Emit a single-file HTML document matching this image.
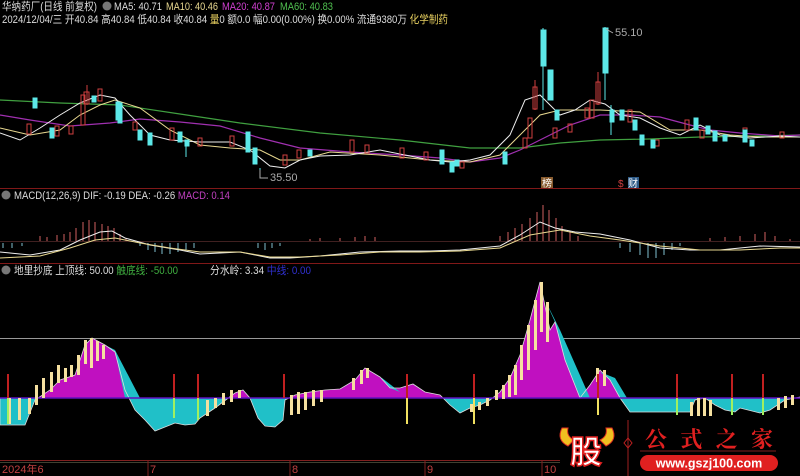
<!DOCTYPE html>
<html><head><meta charset="utf-8"><style>
body{margin:0;background:#000;width:800px;height:476px;overflow:hidden}
svg{display:block;font-family:"Liberation Sans","Noto Sans CJK SC",sans-serif;font-size:11px}
</style></head><body>
<svg width="800" height="476" viewBox="0 0 800 476" xmlns="http://www.w3.org/2000/svg">
<rect width="800" height="476" fill="#000"/>
<!-- header -->
<circle cx="107" cy="6" r="4.5" fill="#777"/>
<text x="2" y="10" fill="#ddd" textLength="95" lengthAdjust="spacingAndGlyphs">华纳药厂(日线 前复权)</text>
<text x="114" y="10" fill="#ddd" textLength="48" lengthAdjust="spacingAndGlyphs">MA5: 40.71</text>
<text x="166" y="10" fill="#e8d890" textLength="52" lengthAdjust="spacingAndGlyphs">MA10: 40.46</text>
<text x="222" y="10" fill="#d040d0" textLength="53" lengthAdjust="spacingAndGlyphs">MA20: 40.87</text>
<text x="280" y="10" fill="#50c050" textLength="53" lengthAdjust="spacingAndGlyphs">MA60: 40.83</text>
<text x="2" y="23" fill="#ddd" textLength="446" lengthAdjust="spacingAndGlyphs">2024/12/04/三 开40.84 高40.84 低40.84 收40.84 <tspan fill="#e8d060">量</tspan>0 额0.0 幅0.00(0.00%) 换0.00% 流通9380万 <tspan fill="#e8d060">化学制药</tspan></text>

<!-- MAs -->
<polyline fill="none" stroke="#40a040" stroke-width="1.2" points="0,100 60,103 120,105 180,114 240,123 320,133 400,140 470,148 520,148 560,143 600,140 650,139 700,137 760,136 800,135"/>
<polyline fill="none" stroke="#a030b0" stroke-width="1.2" points="0,115 30,120 70,126 110,123 140,119 180,122 220,126 260,138 300,148 350,152 400,155 440,158 470,162 500,158 520,150 540,140 570,125 600,115 630,115 660,117 690,125 710,130 740,133 780,136 800,135"/>
<polyline fill="none" stroke="#e8d890" stroke-width="1" points="0,128 30,135 60,130 80,115 100,105 115,100 140,108 170,130 200,145 230,148 260,150 280,160 300,160 330,152 380,155 430,160 470,162 500,155 520,135 540,115 560,110 600,110 640,112 670,130 700,130 730,135 760,137 800,137"/>
<polyline fill="none" stroke="#eee" stroke-width="1" points="0,133 20,140 40,128 60,115 80,103 100,95 115,98 130,115 150,135 170,140 200,142 230,142 250,150 270,166 285,168 300,160 320,156 350,155 380,150 410,156 430,160 450,162 470,160 490,155 510,135 525,100 540,95 550,105 560,115 575,110 590,100 605,104 620,115 640,118 660,128 680,135 700,125 720,135 750,138 780,136 800,137"/>

<g stroke="#d04040" fill="none" stroke-width="1">
<line x1="87" y1="85" x2="87" y2="105"/><rect x="84" y="92" width="5" height="12"/>
<rect x="81" y="95" width="4" height="30"/><rect x="98" y="89" width="4" height="12"/>
<rect x="69" y="126" width="4" height="8"/><rect x="27" y="124" width="4" height="10"/>
<rect x="55" y="126" width="4" height="10"/><rect x="133" y="122" width="4" height="8"/>
<rect x="170" y="128" width="4" height="12"/><rect x="198" y="138" width="4" height="8"/>
<rect x="230" y="136" width="4" height="10"/><rect x="283" y="155" width="4" height="10"/>
<rect x="297" y="150" width="4" height="8"/><rect x="350" y="140" width="4" height="12"/>
<rect x="365" y="145" width="4" height="8"/><rect x="400" y="148" width="4" height="10"/>
<line x1="535" y1="80" x2="535" y2="110"/><rect x="533" y="87" width="4" height="22"/>
<rect x="528" y="118" width="4" height="20"/><rect x="523" y="138" width="4" height="10"/>
<line x1="598" y1="72" x2="598" y2="105"/><rect x="596" y="82" width="4" height="22"/>
<rect x="590" y="100" width="4" height="18"/><rect x="585" y="108" width="4" height="10"/>
<rect x="628" y="110" width="4" height="12"/><rect x="685" y="120" width="4" height="10"/>
<rect x="700" y="130" width="4" height="8"/><rect x="743" y="128" width="4" height="8"/>
<rect x="780" y="132" width="4" height="6"/><rect x="568" y="124" width="4" height="8"/>
<rect x="553" y="128" width="4" height="10"/><rect x="655" y="140" width="4" height="6"/>
<rect x="460" y="162" width="4" height="6"/><rect x="424" y="152" width="4" height="8"/>
</g>
<g fill="#5ce8e8" stroke="#5ce8e8">
<line x1="543" y1="28" x2="543" y2="110"/><rect x="541" y="30" width="5" height="36"/>
<rect x="548" y="70" width="5" height="30"/><rect x="555" y="110" width="4" height="10"/>
<line x1="605" y1="27" x2="605" y2="100"/><rect x="603" y="28" width="5" height="45"/>
<rect x="610" y="110" width="4" height="12"/><line x1="611" y1="105" x2="611" y2="135"/>
<rect x="118" y="103" width="4" height="20"/><rect x="33" y="98" width="4" height="10"/>
<rect x="50" y="128" width="4" height="10"/><rect x="92" y="96" width="4" height="6"/>
<rect x="116" y="102" width="4" height="18"/><rect x="138" y="130" width="4" height="10"/>
<rect x="148" y="133" width="4" height="12"/><rect x="178" y="132" width="4" height="10"/>
<rect x="185" y="140" width="4" height="6"/><line x1="186" y1="140" x2="186" y2="157"/>
<rect x="246" y="132" width="4" height="20"/><rect x="253" y="148" width="4" height="16"/>
<line x1="260" y1="168" x2="260" y2="178"/><rect x="308" y="150" width="4" height="6"/>
<rect x="440" y="150" width="4" height="14"/><rect x="450" y="162" width="4" height="10"/>
<rect x="620" y="110" width="4" height="10"/><rect x="633" y="120" width="4" height="10"/>
<rect x="640" y="135" width="4" height="10"/><rect x="651" y="140" width="4" height="8"/>
<rect x="694" y="118" width="4" height="12"/><rect x="706" y="126" width="4" height="8"/>
<rect x="713" y="131" width="4" height="10"/><rect x="723" y="135" width="4" height="6"/>
<rect x="743" y="130" width="4" height="12"/><rect x="750" y="140" width="4" height="6"/>
<rect x="503" y="152" width="4" height="12"/><rect x="455" y="160" width="4" height="6"/>
</g>
<polyline fill="none" stroke="#aaa" points="260,170 260,178 268,178"/>
<text x="270" y="181" fill="#aaa">35.50</text>
<polyline fill="none" stroke="#aaa" points="606,29 613,33"/>
<text x="615" y="36" fill="#aaa">55.10</text>
<rect x="541" y="177" width="12" height="11" fill="#c08040" opacity="0.7"/><text x="542" y="187" fill="#fff" font-size="10">榜</text>
<text x="618" y="187" fill="#d04040" font-size="10">$</text>
<rect x="628" y="177" width="11" height="11" fill="#4080c0" opacity="0.7"/><text x="628" y="187" fill="#fff" font-size="10">财</text>

<line x1="0" y1="188.5" x2="800" y2="188.5" stroke="#801818"/>
<circle cx="6" cy="195" r="4.5" fill="#777"/>
<text x="14" y="199" fill="#ddd" textLength="216" lengthAdjust="spacingAndGlyphs">MACD(12,26,9)  DIF: -0.19  DEA: -0.26  <tspan fill="#c040c0">MACD: 0.14</tspan></text>
<line x1="0" y1="241.5" x2="800" y2="241.5" stroke="#402020"/>
<g stroke="#d06060" stroke-width="1">
<line x1="40" y1="241" x2="40" y2="236"/><line x1="47" y1="241" x2="47" y2="237"/><line x1="57" y1="241" x2="57" y2="235"/><line x1="64" y1="241" x2="64" y2="234"/><line x1="70" y1="241" x2="70" y2="232"/><line x1="76" y1="241" x2="76" y2="228"/><line x1="83" y1="241" x2="83" y2="222"/><line x1="89" y1="241" x2="89" y2="220"/><line x1="95" y1="241" x2="95" y2="222"/><line x1="102" y1="241" x2="102" y2="224"/><line x1="108" y1="241" x2="108" y2="226"/><line x1="114" y1="241" x2="114" y2="228"/><line x1="120" y1="241" x2="120" y2="234"/><line x1="126" y1="241" x2="126" y2="238"/>
<line x1="310" y1="241" x2="310" y2="239"/><line x1="320" y1="241" x2="320" y2="238"/><line x1="340" y1="241" x2="340" y2="238"/><line x1="355" y1="241" x2="355" y2="237"/><line x1="365" y1="241" x2="365" y2="236"/><line x1="375" y1="241" x2="375" y2="237"/>
<line x1="500" y1="241" x2="500" y2="236"/><line x1="508" y1="241" x2="508" y2="232"/><line x1="515" y1="241" x2="515" y2="228"/><line x1="522" y1="241" x2="522" y2="224"/><line x1="530" y1="241" x2="530" y2="218"/><line x1="537" y1="241" x2="537" y2="212"/><line x1="543" y1="241" x2="543" y2="205"/><line x1="549" y1="241" x2="549" y2="210"/><line x1="556" y1="241" x2="556" y2="218"/><line x1="562" y1="241" x2="562" y2="226"/><line x1="570" y1="241" x2="570" y2="232"/><line x1="578" y1="241" x2="578" y2="236"/>
<line x1="710" y1="241" x2="710" y2="238"/><line x1="725" y1="241" x2="725" y2="237"/><line x1="740" y1="241" x2="740" y2="236"/><line x1="755" y1="241" x2="755" y2="234"/><line x1="765" y1="241" x2="765" y2="232"/><line x1="775" y1="241" x2="775" y2="236"/><line x1="790" y1="241" x2="790" y2="239"/>
</g>
<g stroke="#80c0d0" stroke-width="1">
<line x1="3" y1="243" x2="3" y2="248"/><line x1="12" y1="243" x2="12" y2="248"/><line x1="22" y1="243" x2="22" y2="246"/>
<line x1="140" y1="243" x2="140" y2="246"/><line x1="148" y1="243" x2="148" y2="250"/><line x1="155" y1="243" x2="155" y2="252"/><line x1="162" y1="243" x2="162" y2="254"/><line x1="170" y1="243" x2="170" y2="254"/><line x1="178" y1="243" x2="178" y2="252"/><line x1="186" y1="243" x2="186" y2="250"/><line x1="194" y1="243" x2="194" y2="248"/>
<line x1="258" y1="243" x2="258" y2="248"/><line x1="265" y1="243" x2="265" y2="250"/><line x1="272" y1="243" x2="272" y2="248"/><line x1="280" y1="243" x2="280" y2="246"/>
<line x1="620" y1="243" x2="620" y2="248"/><line x1="630" y1="243" x2="630" y2="252"/><line x1="640" y1="243" x2="640" y2="255"/><line x1="648" y1="243" x2="648" y2="258"/><line x1="656" y1="243" x2="656" y2="258"/><line x1="664" y1="243" x2="664" y2="255"/><line x1="672" y1="243" x2="672" y2="250"/><line x1="680" y1="243" x2="680" y2="246"/>
</g>
<polyline fill="none" stroke="#eee" points="0,252 30,255 60,250 80,240 100,232 112,231 125,238 150,245 180,250 200,254 240,252 270,258 290,258 320,256 360,252 400,251 430,251 460,250 500,246 520,235 540,222 555,228 575,232 600,234 630,240 660,248 690,250 720,250 760,246 800,247"/>
<polyline fill="none" stroke="#e8d890" points="0,258 40,256 70,248 95,240 115,238 140,243 170,248 200,252 240,252 270,257 300,257 340,255 380,252 420,252 460,251 500,248 530,235 560,230 590,236 620,240 660,246 700,250 740,250 780,248 800,248"/>

<line x1="0" y1="263.5" x2="800" y2="263.5" stroke="#801818"/>
<circle cx="6" cy="270" r="4.5" fill="#777"/>
<text x="14" y="274" fill="#ddd" textLength="164" lengthAdjust="spacingAndGlyphs">地里抄底  上顶线: 50.00  <tspan fill="#40b040">触底线: -50.00</tspan></text>
<text x="210" y="274" fill="#ddd" textLength="101" lengthAdjust="spacingAndGlyphs">分水岭: 3.34  <tspan fill="#3030d0">中线: 0.00</tspan></text>
<line x1="0" y1="338.5" x2="800" y2="338.5" stroke="#999"/>
<defs>
<clipPath id="up"><rect x="0" y="0" width="800" height="398"/></clipPath>
<clipPath id="dn"><rect x="0" y="398" width="800" height="80"/></clipPath>
<polygon id="ap" points="0,398 0,425 25,425 35,400 50,390 60,380 75,375 85,345 92,338 105,345 115,352 125,390 135,410 145,420 155,431 165,427 175,423 185,425 195,424 200,418 215,408 235,393 243,390 250,398 258,418 265,426 275,427 283,420 285,400 295,395 310,392 325,390 340,389 355,380 365,368 380,377 390,388 400,388 413,384 425,392 440,395 450,405 460,413 470,408 480,405 490,400 500,392 510,378 520,355 530,320 540,282 550,330 555,322 565,360 580,398 590,385 600,370 610,380 620,398 625,405 630,412 690,412 695,400 705,398 715,405 725,410 735,412 740,408 760,413 770,410 785,400 800,397 800,398"/>
</defs>
<use href="#ap" fill="#c010c0" clip-path="url(#up)"/>
<use href="#ap" fill="#20c0c8" clip-path="url(#dn)"/>
<polygon fill="#20c0c8" points="105,345 115,350 140,398 125,398 115,352"/>
<polygon fill="#20c0c8" points="545,300 560,330 590,398 580,398 565,360 555,322"/>
<polygon fill="#20c0c8" points="600,372 615,378 627,398 620,398 610,380"/>
<polygon fill="#20c0c8" points="365,370 382,378 400,392 390,388 380,377"/>
<use href="#ap" fill="none" stroke="#ddd" stroke-width="0.8"/>
<line x1="0" y1="398" x2="800" y2="398" stroke="#6010c0" stroke-width="1.5"/>
<g fill="#f5e0a0">
<rect x="8" y="398" width="3" height="26"/><rect x="18" y="398" width="3" height="22"/><rect x="28" y="398" width="3" height="16"/>
<rect x="35" y="385" width="3" height="20"/><rect x="42" y="378" width="3" height="20"/><rect x="50" y="372" width="3" height="20"/>
<rect x="57" y="365" width="3" height="18"/><rect x="64" y="368" width="3" height="14"/><rect x="70" y="365" width="3" height="12"/>
<rect x="77" y="355" width="3" height="20"/><rect x="84" y="340" width="3" height="24"/><rect x="90" y="338" width="3" height="30"/><rect x="96" y="341" width="3" height="20"/><rect x="102" y="345" width="3" height="14"/>
<rect x="206" y="400" width="3" height="16"/><rect x="214" y="398" width="3" height="10"/><rect x="222" y="393" width="3" height="12"/><rect x="230" y="390" width="3" height="12"/><rect x="238" y="390" width="3" height="8"/>
<rect x="290" y="395" width="3" height="20"/><rect x="297" y="392" width="3" height="22"/><rect x="304" y="392" width="3" height="18"/><rect x="312" y="390" width="3" height="16"/><rect x="320" y="390" width="3" height="12"/>
<rect x="352" y="378" width="3" height="12"/><rect x="360" y="370" width="3" height="14"/><rect x="366" y="368" width="3" height="10"/>
<rect x="470" y="404" width="3" height="8"/><rect x="478" y="402" width="3" height="8"/><rect x="486" y="398" width="3" height="8"/>
<rect x="495" y="390" width="3" height="10"/><rect x="502" y="385" width="3" height="14"/><rect x="508" y="375" width="3" height="22"/><rect x="514" y="365" width="3" height="30"/>
<rect x="520" y="345" width="3" height="35"/><rect x="527" y="325" width="3" height="45"/><rect x="534" y="300" width="3" height="50"/><rect x="540" y="282" width="3" height="50"/><rect x="546" y="302" width="3" height="40"/>
<rect x="596" y="368" width="3" height="14"/><rect x="603" y="370" width="3" height="16"/>
<rect x="690" y="402" width="3" height="14"/><rect x="697" y="398" width="3" height="18"/><rect x="703" y="398" width="3" height="18"/><rect x="709" y="400" width="3" height="16"/>
<rect x="777" y="398" width="3" height="12"/><rect x="784" y="396" width="3" height="12"/><rect x="791" y="395" width="3" height="10"/>
</g>
<g stroke="#c02020" stroke-width="2">
<line x1="8" y1="374" x2="8" y2="398"/><line x1="174" y1="374" x2="174" y2="398"/><line x1="198" y1="374" x2="198" y2="398"/><line x1="284" y1="374" x2="284" y2="398"/>
<line x1="407" y1="374" x2="407" y2="398"/><line x1="474" y1="374" x2="474" y2="398"/><line x1="598" y1="374" x2="598" y2="398"/><line x1="677" y1="374" x2="677" y2="398"/><line x1="732" y1="374" x2="732" y2="398"/><line x1="763" y1="374" x2="763" y2="398"/>
</g>
<g stroke="#a0f060" stroke-width="2">
<line x1="8" y1="398" x2="8" y2="424"/><line x1="174" y1="398" x2="174" y2="418"/><line x1="198" y1="398" x2="198" y2="420"/><line x1="677" y1="398" x2="677" y2="415"/><line x1="732" y1="398" x2="732" y2="415"/><line x1="763" y1="398" x2="763" y2="415"/>
</g>
<g stroke="#f0e060" stroke-width="2">
<line x1="407" y1="398" x2="407" y2="424"/><line x1="474" y1="398" x2="474" y2="424"/><line x1="598" y1="398" x2="598" y2="415"/>
</g>
<line x1="0" y1="460.5" x2="560" y2="460.5" stroke="#802020"/>
<line x1="0" y1="462.5" x2="560" y2="462.5" stroke="#404030"/>
<g stroke="#802020"><line x1="148" y1="460" x2="148" y2="476"/><line x1="290" y1="460" x2="290" y2="476"/><line x1="425" y1="460" x2="425" y2="476"/><line x1="542" y1="460" x2="542" y2="476"/></g>
<g fill="#c04040">
<text x="2" y="473">2024年6</text><text x="150" y="473">7</text><text x="292" y="473">8</text><text x="427" y="473">9</text><text x="544" y="473">10</text>
</g>
<!-- logo -->
<path d="M562,428 Q556,440 568,446 L574,440 Q566,436 568,428Z" fill="#f0c020" stroke="#e03020"/>
<path d="M612,428 Q618,440 606,446 L600,440 Q608,436 606,428Z" fill="#f0c020" stroke="#e03020"/>
<text x="570" y="463" font-size="32" font-weight="bold" fill="#fff" stroke="#e02020" stroke-width="1.5" font-family="'Noto Sans CJK SC',sans-serif">股</text>
<line x1="628" y1="420" x2="628" y2="476" stroke="#a02020"/>
<path d="M628,438 l4,5 l-4,5 l-4,-5z" fill="none" stroke="#c02020"/>
<text x="645" y="447" font-size="22" font-weight="bold" fill="#e02020" textLength="128" font-family="'Noto Serif CJK SC','Noto Sans CJK SC',sans-serif">公式之家</text>
<line x1="640" y1="451" x2="776" y2="451" stroke="#802020"/>
<rect x="640" y="455" width="138" height="16" rx="8" fill="#e02020"/>
<text x="709" y="467.5" font-size="12.5" font-weight="bold" fill="#fff" text-anchor="middle">www.gszj100.com</text>
</svg>
</body></html>
